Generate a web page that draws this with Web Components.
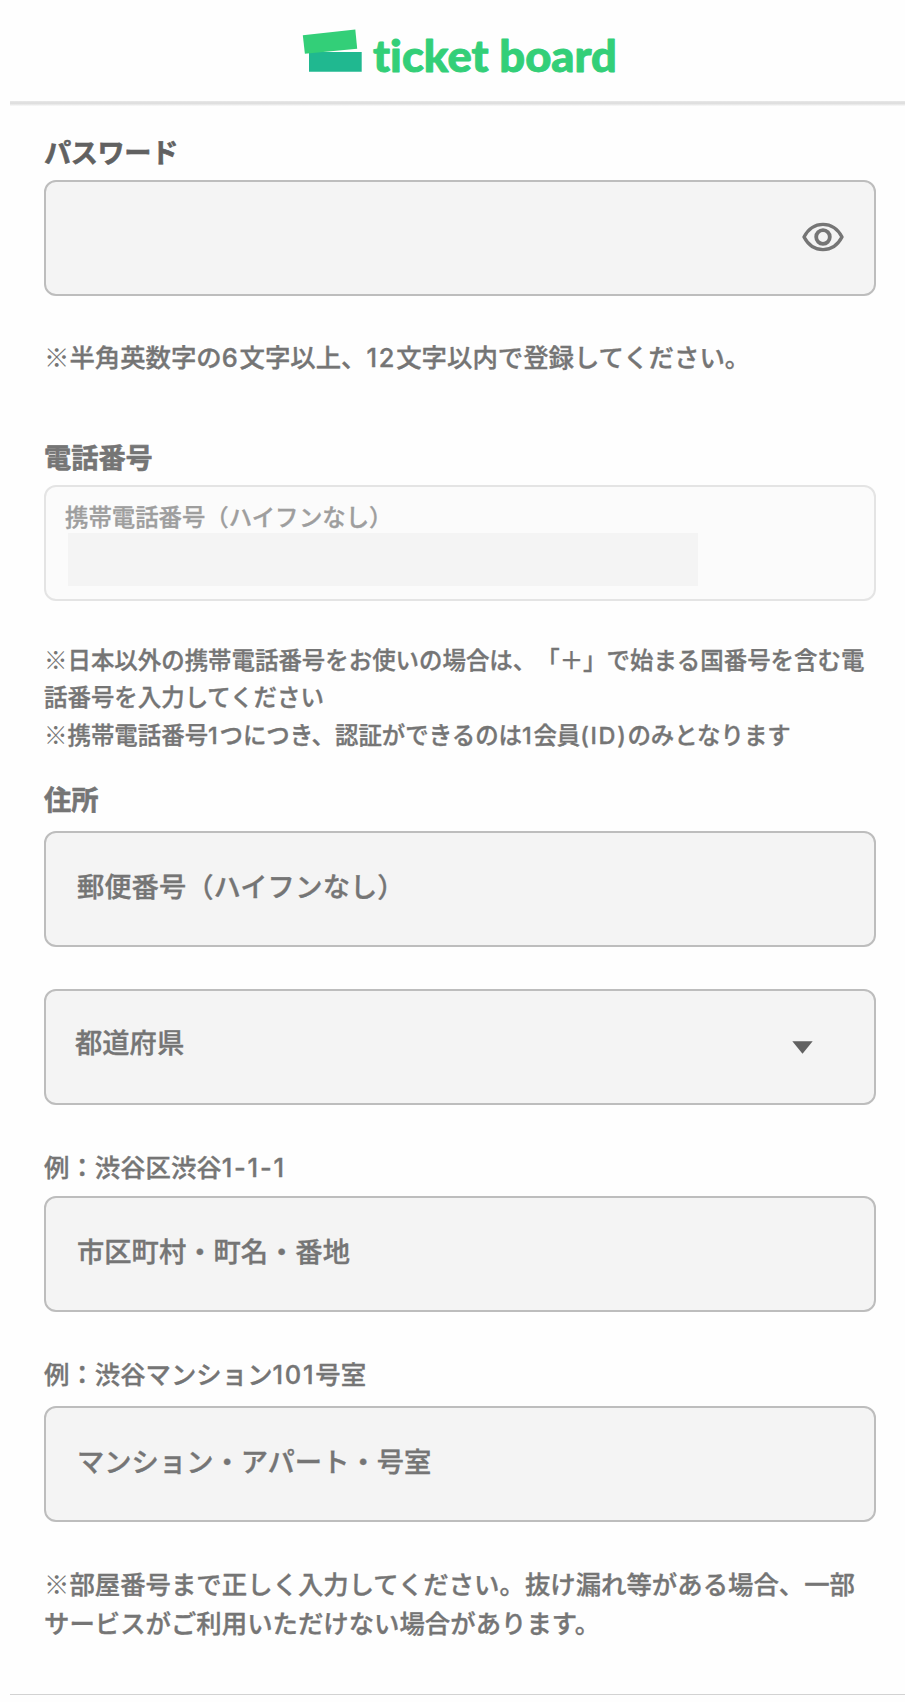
<!DOCTYPE html>
<html lang="ja">
<head>
<meta charset="utf-8">
<title>ticket board</title>
<style>
body
{
    margin:0;
    background:#fefefe;
    color:#757575;
    font-family:Inter, "Noto Sans CJK JP", sans-serif;
    font-weight:500;
    text-spacing-trim:space-all;
    -webkit-text-stroke:.35px;
}
</style>
</head>
<body>
<tb-header></tb-header>
<tb-form>
    <tb-heading style="--color:#616161;letter-spacing:-.4px">パスワード</tb-heading>
    <tb-field style="--top:6px"><tb-eye slot="suffix"></tb-eye></tb-field>
    <tb-note style="--top:42px"><tb-mark>※</tb-mark>半角英数字の<tb-latin>6</tb-latin>文字以上、<tb-latin>12</tb-latin>文字以内で登録してください。</tb-note>

    <tb-heading style="--top:62px">電話番号</tb-heading>
    <tb-phone style="--top:6px">携帯電話番号（ハイフンなし）</tb-phone>
    <tb-note small style="--top:41px"><tb-mark>※</tb-mark>日本以外の携帯電話番号をお使いの場合は、「＋」で始まる国番号を含む電<br>話番号を入力してください<br><tb-mark>※</tb-mark>携帯電話番号<tb-latin>1</tb-latin>つにつき、認証ができるのは<tb-latin>1</tb-latin>会員<tb-latin>(ID)</tb-latin>のみとなります</tb-note>

    <tb-heading style="--top:27px">住所</tb-heading>
    <tb-field style="--top:10.1px">郵便番号（ハイフンなし）</tb-field>
    <tb-field style="--top:42px;--left:29px"><span style="position:relative;top:-2px">都道府県</span><tb-arrow slot="suffix"></tb-arrow></tb-field>
    <tb-note style="--top:43px">例：渋谷区渋谷<tb-latin>1-1-1</tb-latin></tb-note>
    <tb-field style="--top:9px">市区町村・町名・番地</tb-field>
    <tb-note style="--top:43px">例：渋谷マンション<tb-latin>101</tb-latin>号室</tb-note>
    <tb-field style="--top:12px">マンション・アパート・号室</tb-field>
    <tb-note style="--top:43px"><tb-mark>※</tb-mark>部屋番号まで正しく入力してください。抜け漏れ等がある場合、一部<br>サービスがご利用いただけない場合があります。</tb-note>
</tb-form>
<script>
function define(name, html)
{
    const template = document.createElement('template');
    // no whitespace round the slots, the inline elements sit in running text
    template.innerHTML = html.trim().replace(/>\s+</g, '><');
    customElements.define(name, class extends HTMLElement
    {
        constructor()
        {
            super();
            this.attachShadow({mode:'open'});
            this.shadowRoot.appendChild(template.content.cloneNode(true));
        }
    });
}

define('tb-header', `
<style>
:host
{
    display:flex;
    flex-direction:column;
    align-items:center;
    justify-content:space-between;
    box-sizing:border-box;
    height:106px;
    margin-left:10px;
    padding-top:24px;
}
svg
{
    display:block;
    margin-left:4px;
}
text
{
    font-family:Lato, sans-serif;
    font-weight:900;
    font-size:43px;
    font-variant-ligatures:none;
    fill:#33cf78;
    stroke:#33cf78;
    stroke-width:.9px;
    stroke-linejoin:round;
}
.shadow
{
    width:100%;
    height:5px;
    background:linear-gradient(#e8e8e8, #dcdcdc 45%, #fafafa);
}
</style>
<svg width="320" height="60" viewBox="300 24 320 60">
    <path fill="#20b890" d="M309 52h52.7v19.7H309z"/>
    <path fill="#33cf78" d="M302.8 35.2l52.5-5.8 1.9 19.4-52.3 5z"/>
    <text x="373" y="71.5" textLength="244" lengthAdjust="spacingAndGlyphs">ticket board</text>
</svg>
<div class="shadow"></div>
`);

define('tb-form', `
<style>
:host
{
    display:flex;
    flex-direction:column;
    box-sizing:border-box;
    height:1589px;
    margin-left:10px;
    padding:28px 29px 0 34px;
    border-bottom:1px solid #d2d2d2;
}
</style>
<slot></slot>
`);

define('tb-heading', `
<style>
:host
{
    display:block;
    margin-top:var(--top, 0);
    color:var(--color, inherit);
    font-size:27.2px;
    font-weight:700;
    line-height:40px;
    -webkit-text-stroke:.6px;
}
</style>
<slot></slot>
`);

define('tb-note', `
<style>
:host
{
    display:block;
    margin-top:var(--top, 0);
    font-size:25.4px;
    line-height:39px;
    white-space:nowrap;
}
:host([small])
{
    font-size:23.45px;
    line-height:37.3px;
}
</style>
<slot></slot>
`);

// full-width reference mark
define('tb-mark', `
<style>
:host
{
    font-family:"Noto Sans CJK JP", sans-serif;
    font-weight:300;
    line-height:1;
    -webkit-text-stroke:0;
}
</style>
<slot></slot>
`);

define('tb-latin', `
<style>
:host
{
    letter-spacing:.07em;
}
</style>
<slot></slot>
`);

define('tb-field', `
<style>
:host
{
    display:flex;
    align-items:center;
    justify-content:space-between;
    box-sizing:border-box;
    height:116px;
    margin-top:var(--top, 0);
    padding:0 30px 2px var(--left, 31px);
    border:2px solid #bdbdbd;
    border-radius:12px;
    background:#f4f4f4;
    font-size:27.3px;
    line-height:40px;
}
</style>
<div><slot></slot></div>
<slot name="suffix"></slot>
`);

define('tb-phone', `
<style>
:host
{
    display:block;
    box-sizing:border-box;
    height:116px;
    margin-top:var(--top, 0);
    padding:15px 19px 0;
    border:2px solid #e4e4e4;
    border-radius:12px;
    background:#fbfbfb;
    color:#9e9e9e;
    font-size:23.4px;
    line-height:31px;
}
.value
{
    width:630px;
    height:53px;
    margin-left:3px;
    background:#f4f4f4;
}
</style>
<slot></slot>
<div class="value"></div>
`);

define('tb-eye', `
<style>
:host
{
    display:block;
    margin-bottom:1px;
}
svg
{
    display:block;
}
</style>
<svg width="42" height="30" viewBox="0 0 42 30" fill="none" stroke="#757575">
    <path stroke-width="3.4" stroke-linejoin="round" d="M2 15C6 7.5 13 2.4 21 2.4S36 7.5 40 15C36 22.5 29 27.6 21 27.6S6 22.5 2 15z"/>
    <circle cx="21" cy="15" r="6.8" stroke-width="3.8"/>
</svg>
`);

define('tb-arrow', `
<style>
:host
{
    display:block;
    margin:3px 31px 0 0;
}
svg
{
    display:block;
}
</style>
<svg width="21" height="13" viewBox="0 0 21 13"><path fill="#616161" d="M.3.3h20.4L10.5 12.8z"/></svg>
`);
</script>
</body>
</html>
